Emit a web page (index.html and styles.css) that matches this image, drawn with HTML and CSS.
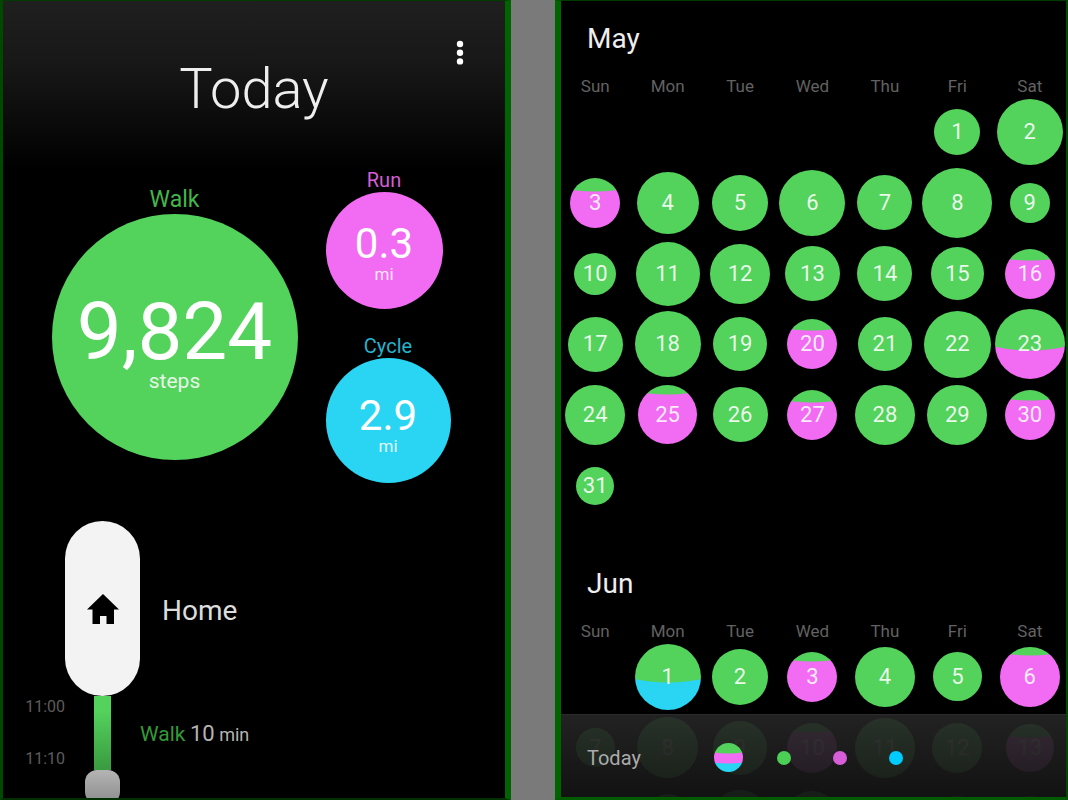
FILE: index.html
```html
<!DOCTYPE html>
<html lang="en">
<head>
    <meta charset="UTF-8">
    <meta name="viewport" content="width=device-width, initial-scale=1">
    <title>Activity tracker</title>
    <link rel="stylesheet" href="styles.css">
</head>
<body>
    <main class="screens">
        <section class="screen today">
            <header class="top">
                <h1>Today</h1>
                <button type="button" class="menu" aria-label="More options">
                    <svg width="8" height="26" viewBox="0 0 8 26" fill="#fff">
                        <circle cx="4" cy="4" r="3.2"/>
                        <circle cx="4" cy="12.7" r="3.2"/>
                        <circle cx="4" cy="21.4" r="3.2"/>
                    </svg>
                </button>
            </header>

            <div class="stats">
                <div class="stat walk">
                    <h2>Walk</h2>
                    <div class="bubble"><strong>9,824</strong><span>steps</span></div>
                </div>
                <div class="side">
                    <div class="stat run">
                        <h2>Run</h2>
                        <div class="bubble"><strong>0.3</strong><span>mi</span></div>
                    </div>
                    <div class="stat cycle">
                        <h2>Cycle</h2>
                        <div class="bubble"><strong>2.9</strong><span>mi</span></div>
                    </div>
                </div>
            </div>

            <div class="timeline">
                <div class="place">
                    <svg width="32" height="32" viewBox="0 0 32 32"><path d="M16 1 L32 16.5 H27 V31 H19.5 V23 H13 V31 H5.5 V16.5 H0 Z" fill="#000"/></svg>
                </div>
                <div class="place-name">Home</div>
                <div class="times"><span>11:00</span><span>11:10</span></div>
                <div class="track"></div>
                <div class="trip"><span class="kind">Walk</span> <b>10</b> min</div>
                <div class="stop"></div>
            </div>
        </section>

        <section class="screen calendar">
            <h2>May</h2>
            <table id="may"></table>
            <h2>Jun</h2>
            <table id="jun"></table>

            <footer class="filter">
                <span class="filter-name">Today</span>
                <button type="button" aria-label="All"><i class="dot all"></i></button>
                <button type="button" aria-label="Walk"><i class="dot green"></i></button>
                <button type="button" aria-label="Run"><i class="dot pink"></i></button>
                <button type="button" aria-label="Cycle"><i class="dot blue"></i></button>
            </footer>
        </section>
    </main>
    <script src="script.js"></script>
</body>
</html>
```
FILE: styles.css
```css
*{
    box-sizing: border-box;
}
body{
    margin: 0;
    background-color: #7a7a7a;
    color: #fff;
    font-family: Roboto, "Liberation Sans", sans-serif;
}
h1, h2{
    margin: 0;
    font-weight: 400;
}
button{
    padding: 0;
    border: none;
    background: none;
    cursor: pointer;
}
.screens{
    display: grid;
    grid-template-columns: 511fr 513fr;
    gap: 44px;
    height: 100vh;
}
.screen{
    position: relative;
    overflow: hidden;
    background-color: #000;
    border: 1px solid #003c00;
}

/* Today */
.today{
    border-left: 3px solid #004a00;
    border-right: 6px solid #006400;
    border-bottom: 2px solid #003000;
    background-image: linear-gradient(#1f1f1f, #181818 60px, #000 170px);
}
.top{
    padding-top: 56px;
    text-align: center;
}
.top h1{
    font-size: 56px;
    line-height: 64px;
    font-weight: 300;
    color: #eee;
}
.menu{
    position: absolute;
    top: 39px;
    right: 41px;
    line-height: 0;
}
.stats{
    display: flex;
    justify-content: center;
    gap: 28px;
    margin-top: 47px;
    padding-right: 6px;
}
.side{
    display: flex;
    flex-direction: column;
    align-items: flex-start;
    gap: 25px;
}
.stat{
    text-align: center;
}
.stat h2{
    font-size: 20px;
    line-height: 24px;
}
.bubble{
    display: flex;
    flex-direction: column;
    align-items: center;
    justify-content: center;
    padding-top: 6px;
    border-radius: 50%;
}
.bubble strong{
    font-size: 42px;
    line-height: 40px;
    font-weight: 400;
}
.bubble span{
    font-size: 17px;
    line-height: 20px;
    opacity: 0.85;
}
.walk{
    margin-top: 18px;
}
.walk h2{
    font-size: 23px;
    line-height: 28px;
    color: #42b64a;
}
.walk .bubble{
    width: 246px;
    height: 246px;
    padding-top: 14px;
    background-color: #53d25c;
}
.walk strong{
    font-size: 80px;
    line-height: 74px;
}
.walk .bubble span{
    font-size: 21px;
    line-height: 24px;
}
.run h2{
    color: #d45ed5;
}
.run .bubble{
    width: 117px;
    height: 117px;
    background-color: #f26bf3;
}
.cycle h2{
    color: #25b4ce;
}
.cycle .bubble{
    width: 125px;
    height: 125px;
    padding-top: 10px;
    background-color: #29d5f2;
}

.timeline{
    display: grid;
    grid-template-columns: 62px 75px 1fr;
    margin-top: 38px;
}
.place{
    grid-column: 2;
    display: flex;
    align-items: center;
    justify-content: center;
    height: 175px;
    border-radius: 38px;
    background-color: #f3f3f3;
}
.place-name{
    align-self: center;
    padding: 4px 0 0 22px;
    font-size: 28px;
    line-height: 32px;
    color: #ddd;
}
.times{
    display: flex;
    flex-direction: column;
    justify-content: space-between;
    font-size: 16px;
    line-height: 22px;
    text-align: right;
    color: #5c5c5c;
}
.track{
    justify-self: center;
    width: 17px;
    height: 74px;
    background-image: linear-gradient(#53d25c 20%, #3a9a40);
}
.trip{
    align-self: center;
    padding-top: 2px;
    font-size: 18px;
    line-height: 24px;
    color: #b5b5b5;
}
.trip b{
    font-size: 22px;
    font-weight: 400;
}
.kind{
    font-size: 21px;
    color: #329a39;
}
.stop{
    grid-column: 2;
    justify-self: center;
    width: 35px;
    height: 34px;
    border-radius: 12px;
    background-image: linear-gradient(#b4b4b4, #8c8c8c);
}

/* Calendar */
.calendar{
    border-left: 6px solid #006400;
    border-right: 2px solid #004a00;
    border-bottom: 3px solid #005a00;
}
.calendar h2{
    padding: 22px 0 21px 26px;
    font-size: 28px;
    line-height: 32px;
    color: #eee;
}
.calendar table + h2{
    padding-top: 47px;
}
.calendar table{
    width: calc(100% + 2px);
    margin-left: -2px;
    table-layout: fixed;
    border-collapse: collapse;
}
.calendar th{
    height: 20px;
    padding: 0;
    font-size: 17px;
    line-height: 20px;
    font-weight: 400;
    color: #626262;
}
.calendar td{
    height: 71px;
    padding: 0;
}
.calendar tbody tr:nth-child(4n) td{
    height: 70px;
}
.day{
    display: flex;
    align-items: center;
    justify-content: center;
    width: var(--size);
    height: var(--size);
    margin: 0 auto;
    border-radius: 50%;
    background-color: #53d25c;
    font-size: 22px;
    line-height: 24px;
    color: rgba(255, 255, 255, 0.88);
}
.day.run, .day.cycle{
    background-image: radial-gradient(circle at 50% calc(var(--cut) - 160px), #53d25c 160px, var(--second) 161px);
}
.day.run{
    --second: #f26bf3;
}
.day.cycle{
    --second: #29d5f2;
}

.filter{
    position: absolute;
    left: 0;
    right: 0;
    bottom: 0;
    display: flex;
    align-items: center;
    height: 83px;
    padding: 3px 0 0 26px;
    border-top: 1px solid #2c2c2c;
    background-image: linear-gradient(rgba(37, 37, 37, 0.92), rgba(19, 19, 19, 0.95));
}
.filter-name{
    width: 113px;
    font-size: 20px;
    line-height: 24px;
    color: #aaa;
}
.filter button{
    display: flex;
    justify-content: center;
    width: 56px;
}
.dot{
    width: 14px;
    height: 14px;
    border-radius: 50%;
}
.dot.all{
    width: 29px;
    height: 29px;
    background-image:
        radial-gradient(circle at 50% -90px, #53d25c 100px, transparent 101px),
        radial-gradient(circle at 50% -80px, #f26bf3 100px, #29d5f2 101px);
}
.green{
    background-color: #4bcf54;
}
.pink{
    background-color: #d85ed9;
}
.blue{
    background-color: #00cbff;
}
```
FILE: script.js
```javascript
const names = ['Sun', 'Mon', 'Tue', 'Wed', 'Thu', 'Fri', 'Sat'];

// [size, second activity, where it starts]
const may = [
    [46], [66],
    [50, 'run', 13], [62], [56], [66], [55], [70], [40],
    [42], [64], [60], [55], [55], [53], [50, 'run', 11],
    [55], [66], [54], [50, 'run', 11], [54], [67], [70, 'run', 41],
    [60], [59, 'run', 9], [55], [50, 'run', 12], [60], [60], [50, 'run', 10],
    [38]
];
const jun = [
    [66, 'cycle', 38], [56], [50, 'run', 9], [60], [49], [60, 'run', 8],
    [39], [61], [54], [50, 'run', 9], [60], [50], [48, 'run', 13],
    [42], [50], [58], [56], [40], [46], [46]
];

// days after "last" get a circle but no number
function drawMonth(id, days, start, last){
    let html = '<thead><tr>';
    names.forEach(n => html += '<th scope="col">' + n + '</th>');
    html += '</tr></thead><tbody><tr>';
    for(let i = 0; i < start; i++){
        html += '<td></td>';
    }
    days.forEach((d, i) => {
        if((i + start) % 7 == 0 && i > 0){ html += '</tr><tr>'; }
        let type = d[1] ? ' ' + d[1] : '';
        let cut = d[1] ? '; --cut: ' + d[2] + 'px' : '';
        let label = i < last ? i + 1 : '';
        html += '<td><span class="day' + type + '" style="--size: ' + d[0] + 'px' + cut + '">' + label + '</span></td>';
    });
    html += '</tr></tbody>';
    document.getElementById(id).innerHTML = html;
}

drawMonth('may', may, 5, 31);
drawMonth('jun', jun, 1, 13);
```
